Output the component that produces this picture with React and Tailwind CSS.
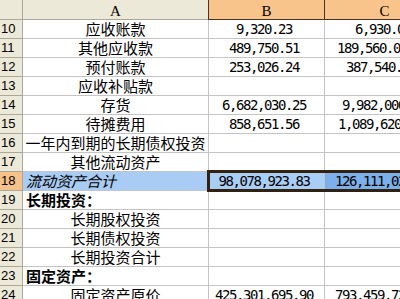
import React from 'react';

// style: b = bold heading, i = italic total; cl = where the C value starts
const rows = [
  { n: 10, a: '应收账款', b: '9,320.23', c: '6,930.00', cl: 'pl-[30px]' },
  { n: 11, a: '其他应收款', b: '489,750.51', c: '189,560.00', cl: 'pl-[12px]' },
  { n: 12, a: '预付账款', b: '253,026.24', c: '387,540.00', cl: 'pl-[21px]' },
  { n: 13, a: '应收补贴款', b: '', c: '' },
  { n: 14, a: '存货', b: '6,682,030.25', c: '9,982,000.00', cl: 'pl-[17px]' },
  { n: 15, a: '待摊费用', b: '858,651.56', c: '1,089,620.00', cl: 'pl-[13px]' },
  { n: 16, a: '一年内到期的长期债权投资', b: '', c: '' },
  { n: 17, a: '其他流动资产', b: '', c: '' },
  { n: 18, a: '流动资产合计', b: '98,078,923.83', c: '126,111,023.00', cl: 'pl-[10px]', style: 'i' },
  { n: 19, a: '长期投资：', b: '', c: '', style: 'b' },
  { n: 20, a: '长期股权投资', b: '', c: '' },
  { n: 21, a: '长期债权投资', b: '', c: '' },
  { n: 22, a: '长期投资合计', b: '', c: '' },
  { n: 23, a: '固定资产：', b: '', c: '', style: 'b' },
  { n: 24, a: '固定资产原价', b: '425,301,695.90', c: '793,459.72', cl: 'pl-[10px]' },
];

function Row({ r }) {
  const sel = r.n === 18;
  return (
    <>
      <div
        className={`h-[19px] border-r border-b border-[#aca899] font-['Liberation_Sans',sans-serif] text-[13px] leading-[18px] pl-px text-black ${
          sel ? 'bg-[#f7c28a]' : 'bg-[#ece9d8]'
        }`}
      >
        {r.n}
      </div>
      <div
        className={`h-[19px] border-r border-b border-[#c4c4c4] whitespace-nowrap font-['Noto_Sans_CJK_SC',sans-serif] text-[15px] leading-[18px] text-black ${
          r.style ? 'text-left pl-[3px]' : 'text-center'
        } ${r.style === 'b' ? 'font-bold' : ''} ${r.style === 'i' ? 'italic bg-[#a8ccf3]' : ''}`}
      >
        {r.a}
      </div>
      <div
        className={`h-[19px] border-r border-b border-[#c4c4c4] whitespace-nowrap text-center pr-[5px] font-['DejaVu_Sans_Mono',monospace] text-[14px] leading-[18px] tracking-[-1.43px] text-black ${
          sel ? 'bg-[#a9cef6]' : ''
        }`}
      >
        {r.b}
      </div>
      <div
        className={`h-[19px] border-b border-[#c4c4c4] whitespace-nowrap text-left font-['DejaVu_Sans_Mono',monospace] text-[14px] leading-[18px] tracking-[-1.43px] text-black ${
          r.cl || ''
        } ${sel ? 'bg-[#7cb0ea]' : ''}`}
      >
        {r.c}
      </div>
    </>
  );
}

export default function App() {
  return (
    <div className="relative w-[400px] h-[299px] overflow-hidden bg-white">
      <div className="grid w-[449px] grid-cols-[23px_186px_116px_124px]">
        {/* column headers */}
        <div className="h-[20px] bg-[#ece9d8] border-r border-b border-[#aca899]" />
        <div className="h-[20px] bg-[#ece9d8] border-r border-b border-[#aca899] text-center font-['Liberation_Serif',serif] text-[15px] leading-[18px] pt-[2px] text-black">
          A
        </div>
        <div className="h-[20px] bg-[#f8c48c] border-l border-r border-b border-[#4d3326] -ml-px text-center font-['Liberation_Serif',serif] text-[15px] leading-[18px] pt-[2px] text-black">
          B
        </div>
        <div className="h-[20px] bg-[#f8c48c] border-b border-[#4d3326] text-center font-['Liberation_Serif',serif] text-[15px] leading-[18px] pt-[2px] pr-[5px] text-black">
          C
        </div>

        {rows.map(r => (
          <Row key={r.n} r={r} />
        ))}
      </div>

      {/* selection frame round B18:C18 */}
      <div className="absolute left-[207px] top-[170px] w-[260px] h-[22px] border-[3px] border-[#33210f] pointer-events-none" />
    </div>
  );
}
